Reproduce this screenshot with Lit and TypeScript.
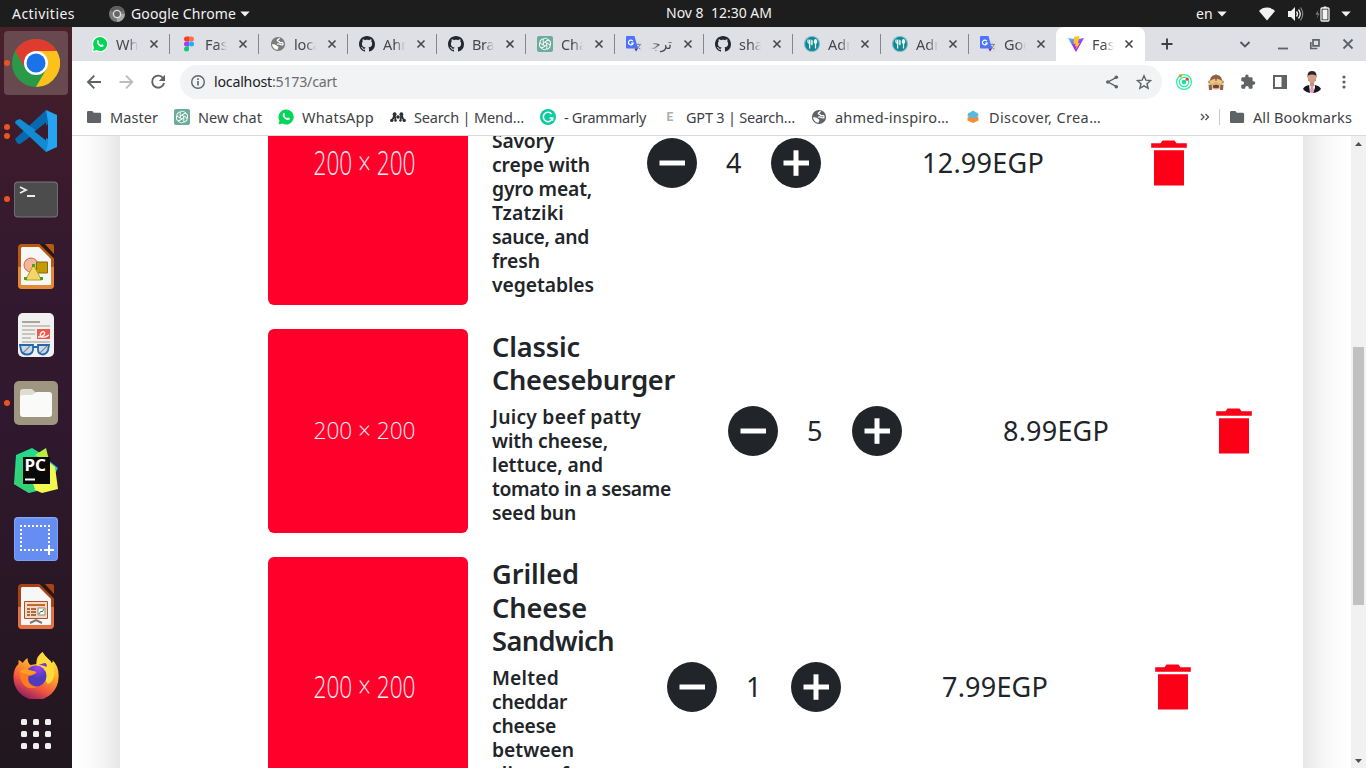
import { LitElement, html, svg, css, nothing } from "lit";
import { customElement, property } from "lit/decorators.js";
import { classMap } from "lit/directives/class-map.js";

/** One line of text whose tracking is adjusted so it spans a given width. */
@customElement("fit-text")
class FitText extends LitElement {
  @property({ type: Number }) w = 0;
  @property() text = "";
  static styles = css`
    :host { display: block; white-space: pre; flex: none; }
    .t { display: inline-block; }
  `;
  render() {
    return html`<span class="t">${this.text}</span>`;
  }
  updated() {
    const el = this.renderRoot.querySelector(".t") as HTMLElement;
    el.style.letterSpacing = "0";
    const natural = el.getBoundingClientRect().width;
    const n = [...this.text].length;
    this.style.width = this.w + "px";
    el.style.letterSpacing = ((this.w - natural) / n).toFixed(3) + "px";
  }
}

const fit = (text: string, w: number) => html`<fit-text .text=${text} .w=${w}></fit-text>`;

const GH = "M8 0C3.58 0 0 3.58 0 8c0 3.54 2.29 6.53 5.47 7.59.4.07.55-.17.55-.38 0-.19-.01-.82-.01-1.49-2.01.37-2.53-.49-2.69-.94-.09-.23-.48-.94-.82-1.13-.28-.15-.68-.52-.01-.53.63-.01 1.08.58 1.23.82.72 1.21 1.87.87 2.33.66.07-.52.28-.87.51-1.07-1.78-.2-3.64-.89-3.64-3.95 0-.87.31-1.59.82-2.15-.08-.2-.36-1.02.08-2.12 0 0 .67-.21 2.2.82.64-.18 1.32-.27 2-.27s1.36.09 2 .27c1.53-1.04 2.2-.82 2.2-.82.44 1.1.16 1.92.08 2.12.51.56.82 1.27.82 2.15 0 3.07-1.87 3.75-3.65 3.95.29.25.54.73.54 1.48 0 1.07-.01 1.93-.01 2.2 0 .21.15.46.55.38A8.01 8.01 0 0 0 16 8c0-4.42-3.58-8-8-8z";

const globe = (c: string) => svg`<circle cx="8" cy="8" r="7.1" fill="${c}"/>
  <path d="M9.500 2.200c-.3 1.200-1.700 1-2.100 1.900-.3.700.5 1.200 1.200 1.200.9 0 .7 1.200 1.600 1.400.9.200 1.700-.4 2.400.1.6.5.3 1.200.3 1.900-.9.500-2.200.1-3.100-.4-.8-.5-2-.6-2.700.1" fill="none" stroke="#fff" stroke-width="1.300"/>
  <path d="M2 8.300c2 .2 3.600.1 4.600 1.100.7.800 1.900.6 1.900 1.900l-1 2.400C4.600 13.600 2.200 11.300 2 8.300z" fill="#fff"/>`;

const gpt = svg`<rect width="16" height="16" rx="2" fill="#6bad9a"/>
  <g fill="none" stroke="#fff" stroke-width=".95">
    ${[0, 60, 120, 180, 240, 300].map((a) => svg`<path transform="rotate(${a} 8 8)" d="M6.200 7V4.600a2.300 2.300 0 0 1 3.500-2l2.300 1.400"/>`)}
    <path d="M8 6l1.700 1v2L8 10 6.300 9V7z"/>
  </g>`;

const whatsapp = svg`<path d="M8 .5a7.500 7.500 0 0 0-6.500 11.200L.6 15.500l3.900-1A7.500 7.500 0 1 0 8 .5z" fill="#00d757"/>
  <path d="M5.300 4c.4-.3.9-.3 1.100.1l.6 1.300c.2.5-.6 1-.5 1.300.5 1 1.400 1.900 2.500 2.400.4.100.8-.8 1.200-.7l1.500.8c.5.3-.1 1.600-.8 1.900-1.200.5-3.200-.4-4.600-1.800C4.700 7.700 4.200 5.200 5.300 4z" fill="#fff"/>`;

const translate = svg`<rect x="6" y="5" width="10" height="11" rx="1" fill="#dcdcdc"/>
  <path d="M9.500 8.500h5.500M12.200 7.500v1M14 8.500c-.5 2-1.900 3.500-3.500 4.300M10.800 9.800c.8 1.500 2 2.600 3.500 3.200" stroke="#7b8d91" stroke-width="1" fill="none"/>
  <path d="M1 0h7.500L12 12.500H1a1 1 0 0 1-1-1V1a1 1 0 0 1 1-1z" fill="#4e73f8"/><path d="M8.500 12.500H12L10 15.500z" fill="#4327c8"/>
  <path d="M6.900 5.200A2.400 2.400 0 1 0 7.200 7H5" fill="none" stroke="#fff" stroke-width="1.200"/>`;

const food = svg`<circle cx="8" cy="8" r="8" fill="#70b9c0"/><circle cx="8" cy="8" r="6.900" fill="#0f8795"/>
  <path d="M4 3.500v3.200M5.700 3.500v3.200M4.200 7h1.400v5.500M11.500 3.500v9" stroke="#e9f6f7" stroke-width="1.300" fill="none"/><ellipse cx="11.500" cy="5.600" rx="1.700" ry="2.500" fill="#e9f6f7"/><ellipse cx="7.800" cy="6.500" rx="1.200" ry="3" fill="#bfe2e5"/>`;

const icons: Record<string, unknown> = {
  whatsapp,
  whatsappRing: svg`<circle cx="8" cy="8" r="8" fill="#fff"/><path d="M0 16 1 10l5 5z" fill="#fff"/><g transform="translate(.6 .6) scale(.925)">${whatsapp}</g>`,
  figma: svg`<path d="M5.500.5H8v5H5.500a2.500 2.500 0 0 1 0-5z" fill="#ff3d12"/><path d="M8 .5h2.500a2.500 2.500 0 0 1 0 5H8z" fill="#ff6d5a"/><path d="M5.500 5.500H8v5H5.500a2.500 2.500 0 0 1 0-5z" fill="#a43cff"/><circle cx="10.500" cy="8" r="2.500" fill="#11b5fd"/><path d="M5.500 10.500H8V13a2.500 2.500 0 1 1-2.500-2.500z" fill="#0cca7a"/>`,
  globe: globe("#7c7c7c"),
  globeDark: globe("#5f6368"),
  github: svg`<path d="${GH}" fill="#24292f"/>`,
  gpt,
  translate,
  food,
  vite: svg`<defs><linearGradient id="vg" x1="0" y1="0" x2=".6" y2="1"><stop offset="0" stop-color="#41d1ff"/><stop offset=".6" stop-color="#a02cff"/><stop offset="1" stop-color="#bd10f5"/></linearGradient></defs>
    <path d="M0 2l8 1.300L16 2 8 16z" fill="url(#vg)"/><path d="M11.600 0 6 1.100 5.600 8l2-.4-.5 3 1.500-.4-.9 3.800 4.200-7.200-2 .4z" fill="#ffc71d"/>`,
  folder: svg`<path d="M1 3.300C1 2.600 1.600 2 2.300 2h4l1.500 1.700h6c.7 0 1.300.6 1.300 1.300v7.700c0 .7-.6 1.300-1.300 1.300H2.300C1.600 14 1 13.400 1 12.700z" fill="#5f6368"/>`,
  mendeley: svg`<g fill="#303030"><circle cx="4.600" cy="5.200" r="1.900"/><circle cx="11.400" cy="5.200" r="1.900"/><circle cx="8" cy="8" r="1.800"/><circle cx="1.800" cy="11.400" r="1.700"/><circle cx="14.200" cy="11.400" r="1.700"/><circle cx="5.600" cy="11.600" r="1.200"/><circle cx="10.400" cy="11.600" r="1.200"/></g><path d="M2 11c1.800-1 1.500-4 2.600-5.500.4 2 .6 4.500 1 6M14 11c-1.800-1-1.500-4-2.600-5.500-.4 2-.6 4.500-1 6" fill="none" stroke="#303030" stroke-width="1.800"/>`,
  grammarly: svg`<circle cx="8" cy="8" r="8" fill="#0ccaa0"/><path d="M11.700 5A4.700 4.700 0 1 0 12.600 9H9.500M12.700 8.500v3.200" fill="none" stroke="#fff" stroke-width="1.500"/>`,
  letterE: svg`<text x="4.500" y="12.300" font-family="Roboto" font-weight="700" font-size="12" fill="#aeaeae">E</text>`,
  stack: svg`<path d="m8 6.500 5.500 2v3L8 14l-5.500-2.500v-3z" fill="#f68b33"/><path d="m8 2 5 2.200.5 3L8 9.500 2.500 7.200l.5-3z" fill="#56b9e0"/><path d="M8 1.500 10 3H6z" fill="#56b9e0"/>`,
};
const icon = (name: string) => html`<svg class="ic" viewBox="0 0 16 16" width="16" height="16">${icons[name]}</svg>`;
const glyph = (body: unknown, s = 20) => html`<svg class="ic" viewBox="0 0 ${s} ${s}" width="${s}" height="${s}">${body}</svg>`;

const baseText = css`
  :host { box-sizing: border-box; font-family: "Noto Sans", "Open Sans", "DejaVu Sans", sans-serif; }
  * { box-sizing: border-box; }
  svg { display: block; flex: none; }
`;

@customElement("system-bar")
class SystemBar extends LitElement {
  static styles = [baseText, css`
    :host { display: grid; grid-template-columns: 666px 107px minmax(0, 1fr); height: 27px; background: #1d1d1d; color: #f2f2f2; font-size: 14px; line-height: 27px; }
    .side { display: flex; align-items: center; padding-left: 12px; }
    .right { padding-left: 423px; }
    .app { margin: 0 6px 0 34px; }
    .name { margin-right: 4px; }
    .date { line-height: 26px; }
    .wifi { margin-left: 32px; }
    .vol { margin-left: 12px; }
    .bat { margin-left: 11px; }
    .last { margin-left: 11px; }
    .lang { margin-right: 4px; }
  `];
  render() {
    const tri = (c = "") => html`<svg class=${c} width="10" height="6" viewBox="0 0 10 6"><path d="M.3.500h9.400L5 5.500z" fill="#f2f2f2"/></svg>`;
    return html`
      <div class="side">${fit("Activities", 63)}
        <svg class="app" width="16" height="16" viewBox="0 0 16 16"><circle cx="8" cy="8" r="8" fill="#777"/><path d="M8 8 1 4a8 8 0 0 1 14 0z" fill="#5e5e5e"/><path d="M8 8h7.900A8 8 0 0 1 8 16z" fill="#a9a9a9"/><circle cx="8" cy="8" r="4.300" fill="#e0e0e0"/><circle cx="8" cy="8" r="2.900" fill="#666"/></svg>
        <div class="name">${fit("Google Chrome", 105)}</div>${tri()}
      </div>
      <div class="date">${fit("Nov 8  12:30 AM", 106)}</div>
      <div class="side right">
        <div class="lang">${fit("en", 17)}</div>${tri()}
        <svg class="wifi" width="16" height="14" viewBox="0 0 16 14"><path d="M8 13.500 0 4a11 11 0 0 1 16 0z" fill="#f2f2f2"/></svg>
        <svg class="vol" width="17" height="16" viewBox="0 0 17 16"><path d="M1 5h3l4-4v14l-4-4H1z" fill="#f2f2f2"/><path d="M9.500 5.500q2 2.500 0 5M11.500 3.500q3.500 4.500 0 9" stroke="#f2f2f2" stroke-width="1.300" fill="none"/><path d="M13.500 1.500q4.500 6.500 0 13" stroke="#858585" stroke-width="1.200" fill="none"/></svg>
        <svg class="bat" width="15" height="16" viewBox="0 0 15 16"><path d="M3.500 4 .5 8.500H3L1.500 13l3-5.500H2.500z" fill="#8b8b8b"/><path d="M8.500.500h3v1.500h-3z" fill="#f2f2f2"/><rect x="6" y="2" width="8" height="13" rx="1" fill="none" stroke="#f2f2f2" stroke-width="1.300"/><path d="M7.500 3.500h5v10h-5z" fill="#f2f2f2"/></svg>
        ${tri("last")}
      </div>`;
  }
}

@customElement("app-dock")
class AppDock extends LitElement {
  static styles = [baseText, css`
    :host { display: flex; flex-direction: column; gap: 4px; width: 72px; flex: none; padding: 4px; background: linear-gradient(#48212a, #3d1b2b 15%, #34192f 32%, #2f182d 55%, #2a1726 75%, #21171e); }
    .item { display: grid; grid-template-columns: 6px 1fr 6px; align-items: center; height: 64px; border-radius: 4px; flex: none; }
    .active { background: #68494f; }
    .grid { height: 46px; }
    .dots { display: flex; flex-direction: column; gap: 3px; }
    .dot { width: 6px; height: 6px; border-radius: 50%; background: #e95420; }
    .item svg { justify-self: center; }
  `];
  render() {
    const doc = (c: string, light: string, body: unknown) => svg`
      <path d="M9 1h20l13 13v28a4 4 0 0 1-4 4H10a4 4 0 0 1-4-4V5a4 4 0 0 1 3-4z" fill="${c}"/><path d="M6 24h36v18a4 4 0 0 1-4 4H10a4 4 0 0 1-4-4z" fill="${light}"/>
      <path d="M10 4h17l12 12v25q0 1-1 1H10q-1 0-1-1V5z" fill="#f7f7f7"/><path d="M27.500 1H32l10 10v4.500z" fill="#291716"/><path d="M33 1h7q2 0 2 2v8z" fill="${c}"/>${body}`;
    const items: [unknown, number][] = [
      [svg`<circle cx="24" cy="24" r="24" fill="#2a9a48"/><path d="M24 12h20.800A24 24 0 0 1 24 48l10.400-18z" fill="#fcc21b"/><path d="M24 12h20.800A24 24 0 0 0 3.200 12l10.400 18z" fill="#e03b30"/><circle cx="24" cy="24" r="12" fill="#fff"/><circle cx="24" cy="24" r="9.500" fill="#1a73e8"/>`, 1],
      [svg`<path d="M3 32 34 3l5 12L8 37q-2 0-3-1z" fill="#0969ae"/><path d="M8 12 40 35l-6 10L3 16q0-2 2-3z" fill="#118bd4"/><path d="m34 3 2 12v21l-2 9 11-5V8z" fill="#25a5ef"/><path d="M22.500 24.500 34 15.500v18z" fill="#3c1b2c"/>`, 2],
      [svg`<rect x="2" y="6.500" width="44" height="36" rx="4" fill="#777"/><rect x="2.800" y="7.500" width="42.400" height="34" rx="3.500" fill="#4c4c4c"/><path d="m8 12 6 3-6 3M15 21h8" fill="none" stroke="#eee" stroke-width="1.800"/>`, 1],
      [doc("#b95a12", "#e28a36", svg`<circle cx="19" cy="22" r="7" fill="#f3b69c" stroke="#c9694b"/><path d="M24.500 19h11v11h-11z" fill="#c29b05" stroke="#836d10"/><path d="m21.500 22 8 15h-16z" fill="#f3d568" stroke="#bd9a21"/><path d="M20 21h3v3h-3zM12 34h3v3h-3zM28 34h3v3h-3z" fill="#3aaa19"/>`), 0],
      [svg`<rect x="6" y="2" width="36" height="44" rx="5" fill="#f1f1f1"/><path d="M10 11h18" stroke="#aaa69b" stroke-width="2"/><path d="M10 15h28M10 19h13M10 23h13M10 27h9M10 31h28" stroke="#c8c6bb" stroke-width="2"/><path d="M25 18h13v10H25z" fill="#f2574a"/><path d="M26 26c5 0 8-3 6-5s-6 4-2 5 5-1 7-2" fill="none" stroke="#fff" stroke-width="1.300"/><path d="m11 42 7-7M28 42l7-7" stroke="#777f8c" stroke-width="1.200"/><path d="M8 34h13v5q-1 4.500-6 4.500-5 0-6-4.500zm18 0h11l-1 5.500q-2 4-6 4-4-1-4-4.500zM21 36h5" fill="#8cacd0" fill-opacity=".35" stroke="#2767ad" stroke-width="1.800"/>`, 0],
      [svg`<rect x="2" y="2" width="44" height="44" rx="5" fill="#9f9681"/><path d="M8 13q0-3 3-3h9l3 3v5H8z" fill="#dfddd0"/><path d="M8 18q0-2 2-2h10l4-3h13q3 0 3 3v19q0 3-3 3H11q-3 0-3-3z" fill="#fafaf9"/>`, 1],
      [svg`<path d="M4 8 20 1l10 6 7 15-12 22-8 2-15-9z" fill="#25d88a"/><path d="m23 8 11-7 4 16z" fill="#b7ed42"/><path d="m35 12 11 9-7 13z" fill="#16c2f2"/><path d="M14 39 38 16l5 4 3 22-16 4z" fill="#f1fa4c"/><path d="M2 37 10 8l13 34-6 4z" fill="#35cf76"/><path d="M11 10h27v27H11z" fill="#090909"/><text x="12.500" y="24" textLength="21.500" lengthAdjust="spacingAndGlyphs" font-family="Noto Sans" font-weight="700" font-size="16" fill="#fff">PC</text><path d="M13 31.500h10v2H13z" fill="#fff"/>`, 0],
      [svg`<rect x="2" y="2" width="44" height="44" rx="4" fill="#82a9fb"/><rect x="2.800" y="3.200" width="42.400" height="42" rx="3.500" fill="#668df1"/><path d="M8 11h31M8 35h23M9 10v26M37 10v21" stroke="#fff" stroke-width="2" stroke-dasharray="2 2"/><path d="M32 35h10M37 30v10" stroke="#fff" stroke-width="2"/>`, 0],
      [doc("#a94314", "#e57041", svg`<path d="M12.500 18.500h23v17h-23z" fill="#f6d8c0" stroke="#aa5128"/><path d="M15 22h18" stroke="#c66634" stroke-width="2"/><path d="M15 26h3M15 29h3M15 32h3M19 26h5M19 29h5M19 32h5" stroke="#94451f" stroke-width="1.500"/><path d="M26 25h7v7h-7z" fill="#fff" stroke="#888"/><path d="m27 31 2-3 1 1 2-3" stroke="#2fa225" fill="none"/><path d="m18 40 6-3 6 3" stroke="#777" stroke-width="2" fill="none"/>`), 0],
      [svg`<defs><linearGradient id="ff" x1=".8" y1="0" x2=".3" y2="1"><stop offset="0" stop-color="#fff14a"/><stop offset=".35" stop-color="#ffaf2b"/><stop offset=".7" stop-color="#f4553e"/><stop offset="1" stop-color="#8a1b67"/></linearGradient><radialGradient id="fp" cx=".6" cy=".1"><stop offset="0" stop-color="#a142f2"/><stop offset="1" stop-color="#503bbd"/></radialGradient></defs>
        <g transform="translate(.5 1)"><path d="M24 12q-1-7 6-12 2 4 8 9-1 1 1 2 2-1 1-3 7 7 6 18A22.500 22.500 0 0 1 1 25q0-9 5-13v-4q3 1 4 3 3-4 5-5 0 5 3 7z" fill="url(#ff)"/><path d="M24 12q2-8 6-12 2 4 8 9 6 8 3 17-2 5-6 6z" fill="#ffda3b"/><circle cx="23.500" cy="24" r="10.500" fill="url(#fp)"/><path d="M7 21q8-4 17-1-1 3-8 4-2 9 9 11-10 4-15-4-3-5-3-10z" fill="#ff7a22"/><path d="M7 20q2-3 7-3l10 3q-2 2-7 3z" fill="#ff9e20"/><path d="m26 13 6-2q3 0 2 4-3-2-8-2z" fill="#7d35cf"/></g>`, 0],
    ];
    return html`${items.map(([body, dots], i) => html`
      <div class=${classMap({ item: true, active: i === 0 })}>
        <div class="dots">${Array.from({ length: dots }, () => html`<div class="dot"></div>`)}</div>
        <svg width="48" height="48" viewBox="0 0 48 48">${body}</svg>
      </div>`)}
      <div class="item grid"><div></div><svg width="30" height="30" viewBox="0 0 30 30">${[0, 12, 24].map((y) => [0, 12, 24].map((x) => svg`<rect x="${x}" y="${y}" width="6" height="6" rx="1.500" fill="#f0f0ef"/>`))}</svg></div>`;
  }
}

@customElement("browser-tabs")
class BrowserTabs extends LitElement {
  static styles = [baseText, css`
    :host { display: flex; height: 34px; padding-left: 8px; background: #dee0e6; color: #45474c; font-size: 14.500px; }
    .tab { display: flex; align-items: center; width: 89px; padding-left: 11px; border-left: 1px solid transparent; position: relative; flex: none; }
    .sep::before { content: ""; position: absolute; left: -1px; top: 7px; width: 1px; height: 20px; background: #85878c; }
    .narrow { width: 88px; }
    .label { width: 22px; margin: 0 11px 0 8px; overflow: hidden; line-height: 33px; -webkit-mask-image: linear-gradient(90deg, #000 55%, transparent); }
    .rtl { direction: rtl; font-family: "DejaVu Sans", sans-serif; font-size: 14px; -webkit-mask-image: linear-gradient(270deg, #000 55%, transparent); }
    .late .label { margin-right: 10px; }
    .active { background: #fff; border-radius: 8px 8px 0 0; }
    .controls { display: flex; align-items: center; }
    .plus { margin-left: 14px; }
    .chev { margin-left: 62px; }
    .min { margin-left: 24px; }
    .res { margin-left: 20px; }
    .cls { margin-left: 21px; }
  `];
  render() {
    const tabs: [string, string, number][] = [["whatsappRing", "Wha", 31], ["figma", "Fast", 28], ["globe", "loca", 27], ["github", "Ahm", 32], ["github", "Bran", 31], ["gpt", "Cha", 26], ["translate", "ترجم", 30], ["github", "sha", 24], ["food", "Adm", 32], ["food", "Adm", 32], ["translate", "Goo", 28], ["vite", "Fast", 28]];
    const x = svg`<path d="m1.500 1.500 7 7m0-7-7 7" stroke="#45474c" stroke-width="1.600"/>`;
    return html`${tabs.map(([ic, label, w], i) => html`
      <div class=${classMap({ tab: true, sep: i > 0 && i < 11, narrow: i > 7 && i < 11, late: i > 7, active: i === 11 })}>
        ${icon(ic)}<div class=${classMap({ label: true, rtl: i === 6 })}>${i === 6 ? label : fit(label, w)}</div>${glyph(x, 10)}
      </div>`)}
      <div class="controls">
        <svg class="plus" width="16" height="16" viewBox="0 0 16 16"><path d="M8 2.500v11M2.500 8h11" stroke="#3c4043" stroke-width="1.900"/></svg>
        <svg class="chev" width="16" height="16" viewBox="0 0 16 16"><path d="m3.500 6 4.500 4.500L12.500 6" fill="none" stroke="#53565c" stroke-width="1.900"/></svg>
        <svg class="min" width="12" height="12" viewBox="0 0 12 12"><path d="M1 10.500h10" stroke="#5f6368" stroke-width="1.800"/></svg>
        <svg class="res" width="12" height="12" viewBox="0 0 12 12"><path d="M4 1.800h6v6H4zM1.800 4v6.500h6.500" fill="none" stroke="#5f6368" stroke-width="1.700"/></svg>
        <svg class="cls" width="12" height="12" viewBox="0 0 12 12"><path d="m1.500 1.500 9 9m0-9-9 9" stroke="#5f6368" stroke-width="1.800"/></svg>
      </div>`;
  }
}

@customElement("browser-toolbar")
class BrowserToolbar extends LitElement {
  static styles = [baseText, css`
    :host { display: flex; align-items: center; height: 41px; padding: 0 6px 0 12px; background: #fff; font-size: 14.200px; }
    .slot { display: grid; place-items: center; width: 32px; height: 32px; flex: none; }
    .nav { display: flex; margin-left: -6px; }
    .box { display: flex; align-items: center; width: 982px; height: 34px; margin: 1px 6px 0 6px; border-radius: 17px; background: #f1f3f4; padding-left: 10px; flex: none; }
    .url { display: flex; margin-left: 8px; color: #202124; line-height: 34px; flex: 1; }
    .rest { color: #6a6d71; }
    .end { display: flex; padding-right: 2px; }
  `];
  render() {
    const k = "#5f6368";
    const slot = (b: unknown, s = 20) => html`<div class="slot">${glyph(b, s)}</div>`;
    return html`
      <div class="nav">
        ${slot(svg`<path d="M17 10H4M10.300 3.700 4 10l6.300 6.300" fill="none" stroke="${k}" stroke-width="1.900"/>`)}
        ${slot(svg`<path d="M3.500 10H16M10 3.700 16.300 10 10 16.300" fill="none" stroke="#b9bbbd" stroke-width="1.900"/>`)}
        ${slot(svg`<path d="M15.300 6.500A6 6 0 1 0 16 11" fill="none" stroke="${k}" stroke-width="1.900"/><path d="M17 2.800V9h-6.200z" fill="${k}"/>`)}
      </div>
      <div class="box">
        ${glyph(svg`<circle cx="8" cy="8" r="6.300" fill="none" stroke="${k}" stroke-width="1.400"/><path d="M8 7v4.500M8 4.300v1.600" stroke="${k}" stroke-width="1.600"/>`, 16)}
        <div class="url">${fit("localhost", 58)}<span class="rest">${fit(":5173/cart", 65)}</span></div>
        <div class="end">
          ${slot(svg`<path d="M12.500 3.300 4 8l8.500 4.700" fill="none" stroke="${k}" stroke-width="1.400"/><g fill="${k}"><circle cx="12.300" cy="3.300" r="1.800"/><circle cx="3.800" cy="8" r="1.800"/><circle cx="12.300" cy="12.700" r="1.800"/></g>`, 16)}
          ${slot(svg`<path d="m8 1.800 1.900 4.400 4.700.4-3.600 3.100 1.100 4.600L8 11.800l-4.100 2.500L5 9.700 1.400 6.600l4.700-.4z" fill="none" stroke="${k}" stroke-width="1.400"/>`, 16)}
        </div>
      </div>
      ${slot(svg`<g fill="none" stroke="#1ef0a0" stroke-width="1.200"><circle cx="8" cy="8" r="7.400"/><circle cx="8" cy="8" r="4.600"/></g><circle cx="8" cy="8" r="2.300" fill="#0fe394"/><circle cx="4.300" cy="1.800" r="1.600" fill="#ff8516"/><circle cx="11.200" cy="5.200" r="1.600" fill="#f53b2c"/>`, 16)}
      ${slot(svg`<circle cx="1.800" cy="8" r="1.800" fill="#bb8b73"/><circle cx="14.200" cy="8" r="1.800" fill="#bb8b73"/><path d="M2 7q0-5 4.500-6L8 .5l1.500.5Q14 2 14 7l-1 6q-5 3-10 0z" fill="#8d604c"/><path d="M3.500 9q4.500-4 9 0l1 5q-5.500 3-11 0z" fill="#e0b083"/><path d="M1.500 7 7 4.500l.8 3.500-5 2.500zM14.500 7 9 4.500 8.200 8l5 2.500z" fill="#f0c674"/><path d="M5 11.500q3-1.500 6 0v2q-3 1.500-6 0z" fill="#694536"/><path d="m.5 10.500 3 .5L4 16H1zM15.500 10.500l-3 .5-.5 5h3z" fill="#8d604c"/>`, 16)}
      ${slot(svg`<path d="M13.600 7.300h-1V4.600c0-.7-.6-1.300-1.300-1.300H8.600v-1a1.700 1.700 0 0 0-3.400 0v1H2.600c-.7 0-1.300.6-1.300 1.300v2.600h1a1.800 1.800 0 0 1 0 3.600h-1v2.600c0 .7.600 1.300 1.300 1.300h2.600v-1a1.800 1.800 0 0 1 3.600 0v1h2.500c.7 0 1.300-.6 1.300-1.300v-2.700h1a1.700 1.700 0 0 0 0-3.400z" fill="${k}"/>`, 16)}
      ${slot(svg`<path d="M2 2h12v12H2z" fill="none" stroke="${k}" stroke-width="2"/><path d="M9.500 2H14v12H9.500z" fill="${k}"/>`, 16)}
      ${slot(svg`<path d="M6.500 5q0-5 4.500-5t4.500 5l-1 5h-7z" fill="#2b2524"/><path d="M7 4.500q4-2 8 0V8q-1 4-4 5-3-1-4-5z" fill="#d6a084"/><path d="M9 11.500h4V17H9z" fill="#c78f78"/><path d="M2 18q1-3 6-4l3 3 3-3q5 1 6 4-3 4-9 4t-9-4z" fill="#171722"/><path d="m8 14 3 2 3-2v3l-2 5H9z" fill="#eee7f0"/><path d="m10 16 2 0 1 5-2 1-2-1z" fill="#ed91b4"/>`, 22)}
      ${slot(svg`<g fill="${k}"><circle cx="8" cy="3" r="1.600"/><circle cx="8" cy="8" r="1.600"/><circle cx="8" cy="13" r="1.600"/></g>`, 16)}`;
  }
}

@customElement("bookmarks-bar")
class BookmarksBar extends LitElement {
  static styles = [baseText, css`
    :host { display: flex; align-items: center; gap: 16px; height: 34px; padding: 0 14px 3px; background: #fff; border-bottom: 1px solid #d9dadc; color: #3e4145; font-size: 14.500px; line-height: 30px; }
    .mark { display: flex; align-items: center; gap: 8px; flex: none; }
    .all { padding-left: 8px; margin-left: -14px; }
    .rule { width: 1px; height: 16px; background: #c9cbce; }
    .more { display: flex; align-items: center; gap: 9px; margin-left: auto; }
    .all .ic { margin-left: -1px; }
  `];
  render() {
    const marks: [string, string, number][] = [["folder", "Master", 48], ["gpt", "New chat", 64], ["whatsapp", "WhatsApp", 72], ["mendeley", "Search | Mend…", 110], ["grammarly", "- Grammarly", 82], ["letterE", "GPT 3 | Search…", 109], ["globeDark", "ahmed-inspiro…", 114], ["stack", "Discover, Crea…", 112]];
    return html`${marks.map(([ic, t, w]) => html`<div class="mark">${icon(ic)}${fit(t, w)}</div>`)}
      <div class="more">
        <svg width="10" height="10" viewBox="0 0 10 10"><path d="m1 2 3 3-3 3m4.500-6 3 3-3 3" fill="none" stroke="#4d5156" stroke-width="1.300"/></svg>
        <div class="rule"></div>
      </div>
      <div class="mark all">${icon("folder")}${fit("All Bookmarks", 99)}</div>`;
  }
}

interface Item { height: number; title: string[]; titleW: number[]; lines: string[]; lineW: number[]; textW: number; qty: number; price: string; priceW: number; }

@customElement("cart-row")
class CartRow extends LitElement {
  @property({ attribute: false }) item!: Item;
  static styles = [baseText, css`
    :host { display: block; color: #212529; }
    .row { display: flex; align-items: center; }
    .photo { border-radius: 6px; }
    .info { display: flex; flex-direction: column; justify-content: flex-end; align-self: stretch; margin-left: 24px; padding-bottom: 8px; font-weight: 560; font-size: 19.300px; line-height: 24px; }
    .tall { padding-bottom: 8.600px; }
    .title { font-size: 27.200px; line-height: 33.600px; padding-bottom: 8px; }
    .qty { display: flex; align-items: center; width: 174px; margin: 0 101px 0 53px; justify-content: space-between; font-size: 27px; line-height: 42px; }
    .price { font-size: 27px; line-height: 42px; }
    .bin { margin-left: 107px; }
  `];
  render() {
    const it = this.item;
    const btn = (plus: boolean) => html`<svg width="50" height="50" viewBox="0 0 50 50"><circle cx="25" cy="25" r="25" fill="#212529"/><path d="M12.500 22.500h25.500v5H12.500z" fill="#fff"/>${plus ? svg`<path d="M22.500 12.300h5v25.500h-5z" fill="#fff"/>` : nothing}</svg>`;
    return html`<div class="row">
      <svg class="photo" width="200" height=${it.height} viewBox="0 0 200 204" preserveAspectRatio="none"><rect width="200" height="204" fill="#ff002b"/><text x="45.500" y="110.300" textLength="102" lengthAdjust="spacingAndGlyphs" font-family="Open Sans, Noto Sans, sans-serif" font-weight="300" font-size="24" fill="#ffeef1">200 × 200</text></svg>
      <div class="info" style="width:${it.textW}px">
        ${it.title.length ? html`<div class="title">${it.title.map((t, i) => fit(t, it.titleW[i]))}</div>` : nothing}
        ${it.lines.map((t, i) => fit(t, it.lineW[i]))}
      </div>
      <div class="qty">${btn(false)}${fit(String(it.qty), 16)}${btn(true)}</div>
      <div class="price">${fit(it.price, it.priceW)}</div>
      <svg class="bin" width="37" height="50" viewBox="0 0 37 50"><path d="M.2 5.300h9.300l2-2.800h12l2 2.800h10.300v4.500H.2zM3 12.300h30v35.300H3z" fill="#fb0016"/></svg>
    </div>`;
  }
}

@customElement("cart-page")
class CartPage extends LitElement {
  static styles = [baseText, css`
    :host { display: grid; grid-template-columns: 48px 1fr 48px 15px; height: 632px; overflow: hidden; background: #fff; }
    .shade { background: linear-gradient(90deg, #fff, #fbfbfb 35%, #f4f4f4 65%, #e7e7e7); }
    .flip { background: linear-gradient(270deg, #fff, #fbfbfb 35%, #f4f4f4 65%, #e7e7e7); }
    .list { display: flex; flex-direction: column; gap: 24px; margin-top: -115px; padding-left: 148px; height: 800px; }
    .bar { display: flex; flex-direction: column; align-items: center; background: #f1f1f1; height: 632px; }
    .thumb { width: 11px; height: 258px; margin-top: 197px; background: #c1c1c1; }
    .grow { flex: 1; }
  `];
  render() {
    const rows: Item[] = [
      { height: 284, title: [], titleW: [], lines: ["Savory", "crepe with", "gyro meat,", "Tzatziki", "sauce, and", "fresh", "vegetables"], lineW: [62, 98, 100, 72, 97, 48, 102], textW: 102, qty: 4, price: "12.99EGP", priceW: 122 },
      { height: 204, title: ["Classic", "Cheeseburger"], titleW: [88, 183], lines: ["Juicy beef patty", "with cheese,", "lettuce, and", "tomato in a sesame", "seed bun"], lineW: [149, 116, 111, 179, 84], textW: 183, qty: 5, price: "8.99EGP", priceW: 106 },
      { height: 260, title: ["Grilled", "Cheese", "Sandwich"], titleW: [87, 95, 122], lines: ["Melted", "cheddar", "cheese", "between", "slices of", "bread"], lineW: [67, 75, 64, 82, 77, 53], textW: 122, qty: 1, price: "7.99EGP", priceW: 106 },
    ];
    return html`<div class="shade"></div>
      <div class="list">${rows.map((r) => html`<cart-row .item=${r}></cart-row>`)}</div>
      <div class="flip"></div>
      <div class="bar"><svg width="15" height="14" viewBox="0 0 15 14"><path d="M4 10h7L7.500 6z" fill="#505050"/></svg><div class="thumb"></div><div class="grow"></div><svg width="15" height="14" viewBox="0 0 15 14"><path d="M4 5h7L7.500 9z" fill="#505050"/></svg></div>`;
  }
}

@customElement("app-root")
class AppRoot extends LitElement {
  static styles = css`
    :host { display: block; width: 1366px; height: 768px; overflow: hidden; }
    .desk { display: flex; height: 741px; }
    .win { flex: 1; min-width: 0; }
  `;
  render() {
    return html`<system-bar></system-bar>
      <div class="desk"><app-dock></app-dock>
        <div class="win"><browser-tabs></browser-tabs><browser-toolbar></browser-toolbar><bookmarks-bar></bookmarks-bar><cart-page></cart-page></div>
      </div>`;
  }
}
